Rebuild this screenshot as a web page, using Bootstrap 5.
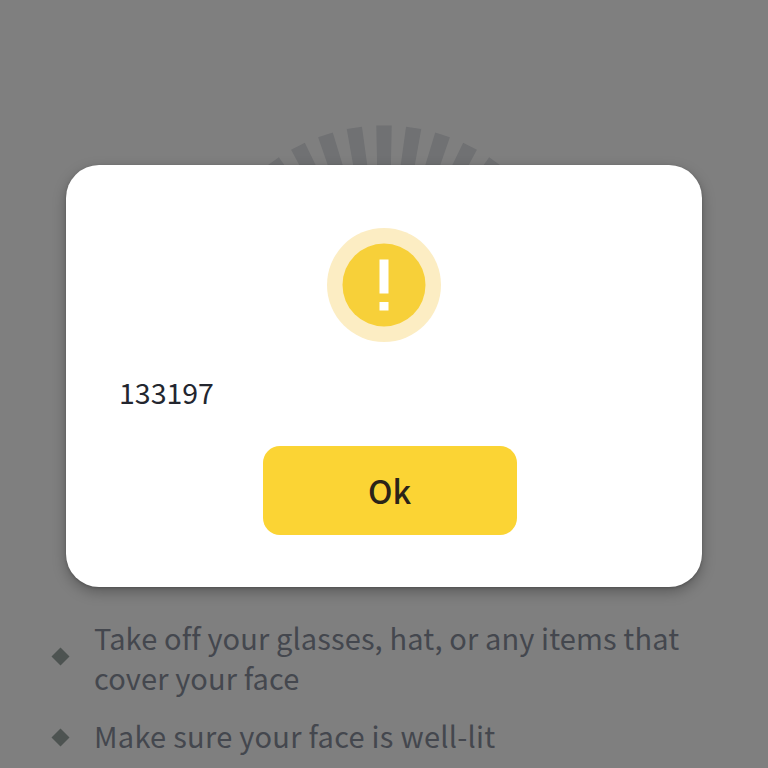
<!DOCTYPE html>
<html lang="en">
<head>
<meta charset="utf-8">
<meta name="viewport" content="width=device-width, initial-scale=1">
<title>Face verification</title>
<link href="https://cdn.jsdelivr.net/npm/bootstrap@5.3.0/dist/css/bootstrap.min.css" rel="stylesheet">
<style>
  body { background: #7f7f7f; font-family: "Noto Sans CJK SC", "Noto Sans", sans-serif; }
  .screen { height: 768px; }
  .ring-art { height: 617px; padding-top: 115px; }
  .tips { padding: 0 51px; color: #44474e; font-size: 29px; line-height: 40px; gap: 18px; }
  .tips li { gap: 24px; }
  .tip-mark { width: 19px; height: 19px; fill: #4d5351; }
  .tip-mark-raised { margin-bottom: 1px; }
  .tip-mark-lowered { margin-top: 4px; }
  .tip-1 { letter-spacing: .13px; }
  .tip-2 { letter-spacing: .27px; }
  .dialog-layer { padding: 165px 66px 0; }
  .notice { width: 636px; height: 422px; border: 0; border-radius: 33px; padding: 62px 53px 52px;
            box-shadow: 0 5px 14px rgba(0,0,0,.28), 0 1px 3px rgba(0,0,0,.2); }
  .code-text { color: #23262f; font-size: 28.5px; line-height: 36px; margin-top: 31px; letter-spacing: 0; }
  .btn-ok { --bs-btn-bg: #fbd434; --bs-btn-hover-bg: #f5cc25; --bs-btn-color: #2b2418; --bs-btn-border-width: 0;
            --bs-btn-border-radius: 17px; width: 254px; height: 89px; font-size: 32.5px; margin-left: 11px; letter-spacing: 0;
            padding-top: 6px; }
</style>
<script src="https://cdn.jsdelivr.net/npm/bootstrap@5.3.0/dist/js/bootstrap.bundle.min.js"></script>
</head>
<body>
<main class="screen position-relative overflow-hidden">
  <div class="ring-art text-center">
    <svg width="400" height="400" viewBox="0 0 400 400" aria-hidden="true">
      <defs><path id="ray" d="M192.300 10.500h15.400l-1 50h-13.400z"/></defs>
      <g fill="#707173">
        <use href="#ray"/>
        <use href="#ray" transform="rotate(9 200 200)"/>
        <use href="#ray" transform="rotate(18 200 200)"/>
        <use href="#ray" transform="rotate(27 200 200)"/>
        <use href="#ray" transform="rotate(36 200 200)"/>
        <use href="#ray" transform="rotate(-9 200 200)"/>
        <use href="#ray" transform="rotate(-18 200 200)"/>
        <use href="#ray" transform="rotate(-27 200 200)"/>
        <use href="#ray" transform="rotate(-36 200 200)"/>
      </g>
    </svg>
  </div>
  <ul class="tips list-unstyled d-flex flex-column mb-0">
    <li class="d-flex align-items-center">
      <svg class="tip-mark tip-mark-raised flex-shrink-0" viewBox="0 0 19 19" aria-hidden="true"><path d="M9.500 .5l9 9-9 9-9-9z"/></svg>
      <span class="tip-1 text-nowrap">Take off your glasses, hat, or any items that<br>cover your face</span>
    </li>
    <li class="d-flex align-items-center">
      <svg class="tip-mark tip-mark-lowered flex-shrink-0" viewBox="0 0 19 19" aria-hidden="true"><path d="M9.500 .5l9 9-9 9-9-9z"/></svg>
      <span class="tip-2 text-nowrap">Make sure your face is well-lit</span>
    </li>
  </ul>
  <div class="dialog-layer position-absolute top-0 start-0" role="dialog" aria-modal="true">
    <div class="notice card align-items-center">
      <svg class="flex-shrink-0" width="116" height="116" viewBox="0 0 116 116" aria-hidden="true">
        <circle cx="58" cy="58" r="57" fill="#fcedc3"/>
        <circle cx="58" cy="58" r="41.500" fill="#f7d039"/>
        <path d="M53.500 32.500h9v34h-9zM53.500 75h9v8.500h-9z" fill="#fff"/>
      </svg>
      <p class="code-text align-self-start mb-0">133197</p>
      <button type="button" class="btn btn-ok fw-medium mt-auto">Ok</button>
    </div>
  </div>
</main>
</body>
</html>
